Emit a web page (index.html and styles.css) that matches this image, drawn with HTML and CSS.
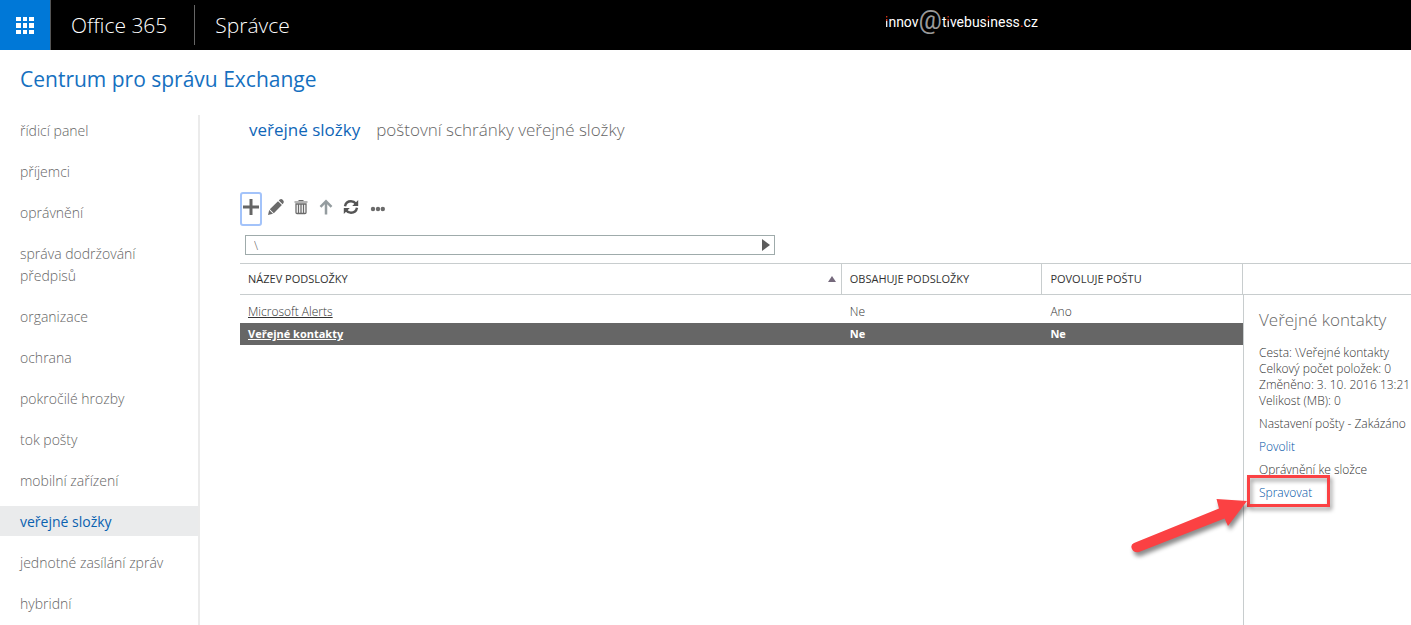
FILE: index.html
```html
<!DOCTYPE html>
<html lang="cs">
<head>
  <meta charset="UTF-8" />
  <meta name="viewport" content="width=device-width, initial-scale=1.0"/>
  <title>Centrum pro správu Exchange</title>
  <link rel="stylesheet" href="styles.css">
</head>
<body>
  <header class="topbar">
    <button type="button" class="launcher" aria-label="Spouštěč aplikací">
      <svg width="18" height="17" viewBox="0 0 18 17" fill="#fff">
        <path d="M0 0h5v4H0zM7 0h4v4H7zM13 0h5v4h-5zM0 6h5v5H0zM7 6h4v5H7zM13 6h5v5h-5zM0 13h5v4H0zM7 13h4v4H7zM13 13h5v4h-5z"/>
      </svg>
    </button>
    <a href="#" class="brand">Office 365</a>
    <a href="#" class="app-name">Správce</a>
    <div class="logo"><span class="dot">i</span>nnov<span class="at">@</span>t<span class="dot">i</span>vebus<span class="dot">i</span>ness<span class="red">.</span>cz</div>
  </header>

  <h1 class="title">Centrum pro správu Exchange</h1>

  <div class="layout">
    <nav class="sidebar">
      <a href="#">řídicí panel</a>
      <a href="#">příjemci</a>
      <a href="#">oprávnění</a>
      <a href="#">správa dodržování předpisů</a>
      <a href="#">organizace</a>
      <a href="#">ochrana</a>
      <a href="#">pokročilé hrozby</a>
      <a href="#">tok pošty</a>
      <a href="#">mobilní zařízení</a>
      <a href="#" class="active">veřejné složky</a>
      <a href="#">jednotné zasílání zpráv</a>
      <a href="#">hybridní</a>
    </nav>

    <main class="content">
      <div class="tabs">
        <a href="#" class="active">veřejné složky</a>
        <a href="#">poštovní schránky veřejné složky</a>
      </div>

      <div class="toolbar">
        <button type="button" class="focused" aria-label="Nová">
          <svg width="16" height="16" viewBox="0 0 16 16"><path d="M6.500 0h3v6.500H16v3H9.500V16h-3V9.500H0v-3h6.500z" fill="#666"/></svg>
        </button>
        <button type="button" aria-label="Upravit">
          <svg width="16" height="16" viewBox="0 0 16 16" fill="#6b6b6b"><path d="M0 16l1.200-5 3.800 3.800zM1.800 10.200L10 2.200l3.900 3.900L5.800 14.200zM10.800 1.400l.9-.8q1.600-1.200 3.200.4t.4 3.300l-.7.900z"/></svg>
        </button>
        <button type="button" aria-label="Odstranit">
          <svg width="14" height="16" viewBox="0 0 14 16" fill="none" stroke="#6b6b6b"><path d="M4.500 1.500h5M.5 3h13" stroke-width="1.200"/><path d="M2 5v8.500q0 1 1 1h8q1 0 1-1V5zM4.500 5v9M7 5v9M9.500 5v9" stroke-width="1.300"/></svg>
        </button>
        <button type="button" aria-label="Nahoru">
          <svg width="14" height="16" viewBox="0 0 14 16" fill="none" stroke="#949c9f" stroke-width="2.500"><path d="M7 15.500V2M1.500 7.800L7 2.200l5.500 5.600"/></svg>
        </button>
        <button type="button" aria-label="Aktualizovat">
          <svg width="16" height="16" viewBox="0 0 16 16"><g fill="none" stroke="#555" stroke-width="2.400"><path d="M2 7.200Q3 2.200 8 2.200q3 0 5 2.600M14 8.800q-1 5-6 5-3 0-5-2.600"/></g><path d="M15.200 1v6H9.200zM.8 15V9h6z" fill="#555"/></svg>
        </button>
        <button type="button" aria-label="Další">
          <svg width="18" height="16" viewBox="0 0 18 16" fill="#6b6b6b"><circle cx="6" cy="10" r="2.200"/><circle cx="11" cy="10" r="2.200"/><circle cx="15.800" cy="10" r="2.200"/></svg>
        </button>
      </div>

      <form class="path-box">
        <input type="text" value="\" aria-label="Cesta ke složce" />
        <button type="button" aria-label="Přejít">
          <svg width="8" height="12" viewBox="0 0 8 12"><path d="M0 0l8 6-8 6z" fill="#5c5c5c"/></svg>
        </button>
      </form>

      <div class="split">
        <table class="folders">
          <thead>
            <tr>
              <th class="col-name"><div>Název podsložky
                <svg width="8" height="6" viewBox="0 0 8 6"><path d="M4 0l4 6H0z" fill="#75697c"/></svg></div></th>
              <th><div>Obsahuje podsložky</div></th>
              <th><div>Povoluje poštu</div></th>
            </tr>
          </thead>
          <tbody>
            <tr>
              <td><a href="#">Microsoft Alerts</a></td>
              <td>Ne</td>
              <td>Ano</td>
            </tr>
            <tr class="selected">
              <td><a href="#">Veřejné kontakty</a></td>
              <td>Ne</td>
              <td>Ne</td>
            </tr>
          </tbody>
        </table>

        <aside class="details">
          <div class="details-head"></div>
          <div class="details-body">
            <h2>Veřejné kontakty</h2>
            <p>Cesta: \Veřejné kontakty<br>
              Celkový počet položek: 0<br>
              Změněno: 3. 10. 2016 13:21<br>
              Velikost (MB): 0</p>
            <p>Nastavení pošty - Zakázáno</p>
            <p><a href="#">Povolit</a></p>
            <p>Oprávnění ke složce</p>
            <p class="marked">
              <a href="#">Spravovat</a>
              <span class="frame"></span>
              <svg class="arrow" width="124" height="64" viewBox="0 0 124 64">
                <path d="M6 47L91 12.500 88.500 3 119 5 100 30 96.500 22.500 11 56Q6 57 4 53t2-6z" fill="#fb4143"/>
              </svg>
            </p>
          </div>
        </aside>
      </div>
    </main>
  </div>
</body>
</html>
```

FILE: styles.css
```css
* {
  box-sizing: border-box;
}
body {
  margin: 0;
  min-height: 100vh;
  display: flex;
  flex-direction: column;
  background: #fff;
  color: #333;
  font-family: "Segoe UI", "Open Sans", "Noto Sans", sans-serif;
  font-size: 12px;
  font-weight: 300;
}
a {
  color: inherit;
  text-decoration: none;
}
button {
  padding: 0;
  border: none;
  background: none;
  cursor: pointer;
}

/* top bar */
.topbar {
  position: relative;
  display: flex;
  align-items: center;
  height: 50px;
  background: #000;
  color: #fff;
  font-size: 21px;
}
.launcher {
  display: flex;
  align-items: center;
  justify-content: center;
  width: 51px;
  height: 50px;
  background: #0078d7;
  border-right: 1px solid #555;
}
.brand {
  padding: 0 27px 0 20px;
  line-height: 40px;
  border-right: 1px solid #666;
}
.app-name {
  padding-left: 20px;
}
.logo {
  position: absolute;
  left: 885px;
  top: 8px;
  line-height: 28px;
  font-family: Roboto, sans-serif;
  font-size: 14px;
  font-weight: normal;
  white-space: nowrap;
}
.logo .at {
  color: #999;
  font-size: 26px;
  line-height: 20px;
  vertical-align: -2px;
}
.logo .dot {
  background: linear-gradient(#f0401e 42%, #fff 42%);
  -webkit-background-clip: text;
  background-clip: text;
  color: transparent;
}
.logo .red {
  color: #f0401e;
}

.title {
  margin: 0;
  padding: 14px 20px 21px;
  color: #1570bf;
  font-size: 21px;
  font-weight: normal;
  line-height: 30px;
}
.layout {
  flex: 1;
  display: flex;
}

/* left navigation */
.sidebar {
  width: 200px;
  flex-shrink: 0;
  border-right: 2px solid #ebebeb;
  font-size: 14px;
  line-height: 22px;
}
.sidebar a {
  display: block;
  margin-bottom: 11px;
  padding: 5px 30px 3px 20px;
  color: #666;
}
.sidebar a:last-child {
  margin-bottom: 0;
  padding-bottom: 0;
}
.sidebar .active {
  background: #eaebec;
  color: #0a61b0;
  font-weight: normal;
}

/* content */
.content {
  flex: 1;
  min-width: 0;
  display: flex;
  flex-direction: column;
  padding-left: 40px;
}
.tabs {
  display: flex;
  gap: 16px;
  padding-left: 9px;
  color: #666;
  font-size: 17px;
  line-height: 30px;
}
.tabs .active {
  color: #0f66b8;
  font-weight: normal;
}
.toolbar {
  display: flex;
  gap: 3px;
  margin-top: 47px;
}
.toolbar button {
  display: flex;
  align-items: center;
  justify-content: center;
  width: 22px;
  height: 34px;
  padding-bottom: 4px;
}
.toolbar .focused {
  border: 2px solid #a3c3fa;
  border-radius: 3px;
}
.path-box {
  display: flex;
  width: 530px;
  height: 20px;
  margin: 9px 0 8px 5px;
  border: 1px solid #9fabab;
}
.path-box input {
  flex: 1;
  padding: 0 8px;
  border: none;
  outline: none;
  color: #666;
  font: inherit;
}
.path-box button {
  display: flex;
  align-items: center;
  justify-content: center;
  width: 16px;
}

.split {
  flex: 1;
  display: flex;
}
.folders {
  flex: 1;
  width: 100%;
  align-self: flex-start;
  table-layout: fixed;
  border-collapse: separate;
  border-spacing: 0;
  line-height: 22px;
}
.folders th {
  width: 20%;
  height: 32px;
  padding: 0;
  border-top: 1px solid #c8cdce;
  border-bottom: 1px solid #c8cdce;
  color: #333;
  font-size: 11px;
  font-weight: normal;
  text-align: left;
  text-transform: uppercase;
}
.folders th div {
  display: flex;
  align-items: center;
  justify-content: space-between;
  height: 30px;
  padding: 0 5px 0 8px;
  border-right: 1px solid #c8cdce;
}
.folders .col-name {
  width: 60%;
}
.folders td {
  padding: 0 8px;
}
.folders tbody tr:first-child td {
  padding-top: 6px;
}
.folders td a {
  text-decoration: underline;
}
.folders .selected {
  background: #666;
  color: #fff;
  font-size: 11px;
  font-weight: bold;
}

/* details pane */
.details {
  display: flex;
  flex-direction: column;
  flex-shrink: 0;
  width: 168px;
  line-height: 16px;
}
.details-head {
  height: 32px;
  border-top: 1px solid #c8cdce;
  border-bottom: 1px solid #c8cdce;
}
.details-body {
  flex: 1;
  padding: 12px 0 0 15px;
  border-left: 1px solid #c8cdce;
  white-space: nowrap;
}
.details h2 {
  margin: 0 0 12px;
  color: #666;
  font-size: 17px;
  font-weight: 300;
  line-height: 26px;
}
.details p {
  margin: 0 0 7px;
}
.details a {
  color: #0054a6;
}
.marked {
  position: relative;
}
.frame {
  position: absolute;
  left: -12px;
  top: -10px;
  width: 83px;
  height: 32px;
  border: 3px solid #fb4143;
  filter: drop-shadow(2px 3px 2px rgba(0, 0, 0, 0.4));
}
.arrow {
  position: absolute;
  left: -131px;
  top: 11px;
  filter: drop-shadow(2px 4px 2px rgba(0, 0, 0, 0.45));
}
```
